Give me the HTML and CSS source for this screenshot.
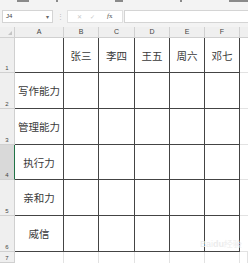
FILE: index.html
```html
<!DOCTYPE html>
<html>
<head>
  <title>Sheet</title>
  <link rel="stylesheet" href="styles.css">
</head>
<body>
  <div class="ribbon">
    <span class="group g1"></span>
    <span class="group g2"></span>
    <span class="group g3"></span>
    <span class="group g4"></span>
    <span class="group g5"></span>
  </div>

  <div class="formula-bar">
    <div class="name-box">
      <span>J4</span>
      <span class="arrow">▾</span>
    </div>
    <div class="sep">⋮</div>
    <div class="buttons">
      <span class="btn">✕</span>
      <span class="btn">✓</span>
      <span class="fx"><i>f</i>x</span>
    </div>
    <div class="formula-input"></div>
  </div>

  <div class="sheet">
    <div class="corner"><span class="tri"></span></div>
    <div class="col-head">A</div>
    <div class="col-head">B</div>
    <div class="col-head">C</div>
    <div class="col-head">D</div>
    <div class="col-head">E</div>
    <div class="col-head">F</div>
    <div class="col-head last"></div>

    <div class="row-head">1</div>
    <div class="cell"></div>
    <div class="cell">张三</div>
    <div class="cell">李四</div>
    <div class="cell">王五</div>
    <div class="cell">周六</div>
    <div class="cell">邓七</div>
    <div class="cell out"></div>

    <div class="row-head">2</div>
    <div class="cell">写作能力</div>
    <div class="cell"></div>
    <div class="cell"></div>
    <div class="cell"></div>
    <div class="cell"></div>
    <div class="cell"></div>
    <div class="cell out"></div>

    <div class="row-head">3</div>
    <div class="cell">管理能力</div>
    <div class="cell"></div>
    <div class="cell"></div>
    <div class="cell"></div>
    <div class="cell"></div>
    <div class="cell"></div>
    <div class="cell out"></div>

    <div class="row-head active">4</div>
    <div class="cell">执行力</div>
    <div class="cell"></div>
    <div class="cell"></div>
    <div class="cell"></div>
    <div class="cell"></div>
    <div class="cell"></div>
    <div class="cell out"></div>

    <div class="row-head">5</div>
    <div class="cell">亲和力</div>
    <div class="cell"></div>
    <div class="cell"></div>
    <div class="cell"></div>
    <div class="cell"></div>
    <div class="cell"></div>
    <div class="cell out"></div>

    <div class="row-head">6</div>
    <div class="cell">威信</div>
    <div class="cell"></div>
    <div class="cell"></div>
    <div class="cell"></div>
    <div class="cell"></div>
    <div class="cell"></div>
    <div class="cell out"></div>

    <div class="row-head">7</div>
    <div class="cell empty"></div>
    <div class="cell empty"></div>
    <div class="cell empty"></div>
    <div class="cell empty"></div>
    <div class="cell empty"></div>
    <div class="cell empty"></div>
    <div class="cell empty out"></div>

    <div class="watermark">Bai<b>du</b>经验</div>
  </div>
</body>
</html>
```

FILE: styles.css
```css
body {
  margin: 0;
  padding: 0;
  width: 248px;
  height: 263px;
  overflow: hidden;
  background-color: #f3f3f3;
  font-family: "Noto Sans CJK SC", "Noto Sans", sans-serif;
}

/* bottom edge of the ribbon, its labels are cut off by the crop */
.ribbon {
  height: 4px;
  position: relative;
}

.group {
  position: absolute;
  top: 0;
  height: 2px;
  background-color: #8a8a8a;
}

.g1 { left: 17px; width: 12px; }
.g2 { left: 56px; width: 2px; }
.g3 { left: 115px; width: 8px; }
.g4 { left: 180px; width: 2px; }
.g5 { left: 229px; width: 19px; }

.formula-bar {
  display: flex;
  align-items: center;
  height: 23px;
  padding-top: 1px;
  padding-left: 2px;
  box-sizing: border-box;
}

.name-box {
  width: 51px;
  height: 13px;
  background-color: #ffffff;
  border: 1px solid #d4d4d4;
  box-sizing: border-box;
  display: flex;
  align-items: center;
  justify-content: space-between;
  padding: 0 3px 0 3px;
  font-family: "Liberation Sans", Arial, sans-serif;
  font-size: 6px;
  color: #444444;
}

.name-box .arrow {
  font-size: 6px;
  color: #666666;
}

.sep {
  width: 14px;
  text-align: center;
  font-size: 7px;
  color: #bbbbbb;
}

.buttons {
  width: 56px;
  height: 13px;
  background-color: #ffffff;
  border: 1px solid #e0e0e0;
  box-sizing: border-box;
  display: flex;
  align-items: center;
  gap: 8px;
  padding-left: 9px;
  font-family: "DejaVu Sans", sans-serif;
  font-size: 6px;
}

.btn {
  color: #c8c8c8;
}

.fx {
  margin-left: 4px;
  color: #555555;
  font-family: "Liberation Serif", serif;
  font-size: 7px;
}

.formula-input {
  flex: 1;
  height: 13px;
  margin-left: 1px;
  background-color: #ffffff;
  border: 1px solid #d4d4d4;
  border-right: none;
  box-sizing: border-box;
}

.sheet {
  position: relative;
  display: grid;
  grid-template-columns: 15px 49px 35px 36px 35px 35px 35px 1fr;
  grid-template-rows: 11px 35px 36px 36px 35px 36px 36px 1fr;
  height: 236px;
  background-color: #ffffff;
}

.corner,
.col-head,
.row-head {
  background-color: #efefef;
  border-right: 1px solid #d0d0d0;
  border-bottom: 1px solid #d0d0d0;
  box-sizing: border-box;
  color: #444444;
  font-family: "Liberation Sans", Arial, sans-serif;
}

.corner {
  position: relative;
}

.tri {
  position: absolute;
  right: 2px;
  bottom: 2px;
  width: 0;
  height: 0;
  border-left: 4px solid transparent;
  border-bottom: 4px solid #c4c4c4;
}

.col-head {
  font-size: 7px;
  line-height: 10px;
  text-align: center;
}

.col-head.last {
  border-right: none;
}

.row-head {
  font-size: 6px;
  display: flex;
  align-items: flex-end;
  justify-content: center;
  padding-bottom: 1px;
}

.row-head.active {
  background-color: #d9d9d9;
  border-right: 1px solid #217346;
}

.cell {
  border-right: 1px solid #444444;
  border-bottom: 1px solid #444444;
  box-sizing: border-box;
  display: flex;
  align-items: center;
  justify-content: center;
  font-size: 10.5px;
  color: #3a3a3a;
}

.cell.out {
  border-right: none;
  border-bottom: 1px solid #e2e2e2;
}

.cell.empty {
  border-bottom: none;
  border-right: 1px solid #e2e2e2;
}

.watermark {
  position: absolute;
  right: 6px;
  bottom: 12px;
  font-family: "Liberation Sans", Arial, sans-serif;
  font-size: 9px;
  color: #ececec;
}

.watermark b {
  font-weight: bold;
}
```
